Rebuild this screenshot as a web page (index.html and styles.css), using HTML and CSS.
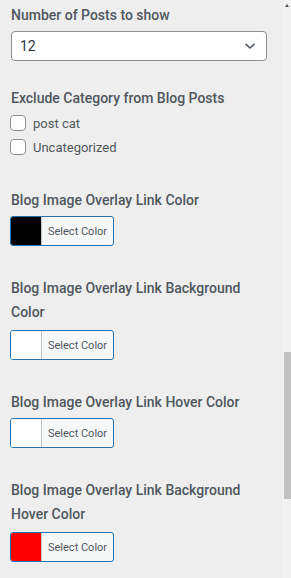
FILE: index.html
```html
<!DOCTYPE html>
<html>
<head>
  <meta charset="UTF-8">
  <title>Customizer - Blog Options</title>
  <link rel="stylesheet" href="styles.css">
</head>
<body>
  <div class="customize-pane">
    <ul class="control-list">
      <li class="control control-select">
        <span class="control-title">Number of Posts to show</span>
        <div class="select-box">
          <span class="select-value">12</span>
          <svg class="select-arrow" width="12" height="8" viewBox="0 0 12 8">
            <path d="M1.5 1.8 L6 6 L10.5 1.8" fill="none" stroke="#50575e" stroke-width="1.6"/>
          </svg>
        </div>
      </li>

      <li class="control control-checks">
        <span class="control-title">Exclude Category from Blog Posts</span>
        <label class="check-row"><span class="check-box"></span>post cat</label>
        <label class="check-row"><span class="check-box"></span>Uncategorized</label>
      </li>

      <li class="control">
        <span class="control-title">Blog Image Overlay Link Color</span>
        <button class="color-button"><span class="color-swatch" style="background:#000"></span><span class="color-text">Select Color</span></button>
      </li>

      <li class="control">
        <span class="control-title title-long">Blog Image Overlay Link Background Color</span>
        <button class="color-button"><span class="color-swatch" style="background:#fff"></span><span class="color-text">Select Color</span></button>
      </li>

      <li class="control">
        <span class="control-title">Blog Image Overlay Link Hover Color</span>
        <button class="color-button"><span class="color-swatch" style="background:#fff"></span><span class="color-text">Select Color</span></button>
      </li>

      <li class="control">
        <span class="control-title title-long">Blog Image Overlay Link Background Hover Color</span>
        <button class="color-button"><span class="color-swatch" style="background:#ff0000"></span><span class="color-text">Select Color</span></button>
      </li>
    </ul>
  </div>

  <div class="scrollbar">
    <span class="scroll-arrow"></span>
    <span class="scroll-thumb"></span>
  </div>
</body>
</html>
```

FILE: styles.css
```css
/* WordPress customizer side pane */
:root {
  --pane-bg: #eeeeee;
  --title-color: #50575e;
  --text-color: #50575e;
  --input-border: #8c8f94;
  --accent: #2271b1;
  --button-bg: #f6f7f7;
  --track-bg: #f1f1f1;
  --thumb-bg: #c1c1c1;
}

html, body {
  height: 100%;
}

body {
  margin: 0;
  display: flex;
  background-color: var(--pane-bg);
  font-family: Roboto, "Liberation Sans", sans-serif;
  color: var(--text-color);
  overflow: hidden;
}

.customize-pane {
  width: 282px;
  flex-shrink: 0;
}

.control-list {
  list-style: none;
  margin: 0;
  padding: 3px 16px 0 10px;
}

.control {
  margin-bottom: 30px;
}

.control-select {
  margin-bottom: 25px;
}

.control-checks {
  margin-bottom: 29px;
}

.control-title {
  display: block;
  padding-left: 1px;
  margin-bottom: 4px;
  font-size: 14px;
  font-weight: 500;
  line-height: 24px;
  color: var(--title-color);
}

/* wrapped titles sit a bit further from their button */
.title-long {
  margin-bottom: 6px;
}

.control-checks .control-title {
  margin-bottom: 1px;
}

/* select */
.select-box {
  box-sizing: border-box;
  width: 256px;
  height: 30px;
  margin-left: 1px;
  padding: 0 8px;
  display: flex;
  align-items: center;
  justify-content: space-between;
  background: #fff;
  border: 1px solid var(--input-border);
  border-radius: 4px;
  font-size: 14px;
  color: #2c3338;
}

.select-arrow {
  margin-right: 2px;
}

/* checkboxes */
.check-row {
  display: flex;
  align-items: center;
  gap: 7px;
  height: 24px;
  font-size: 13px;
  color: var(--text-color);
}

.check-box {
  box-sizing: border-box;
  width: 16px;
  height: 16px;
  background: #fff;
  border: 1px solid var(--input-border);
  border-radius: 4px;
}

/* color picker button */
.color-button {
  box-sizing: border-box;
  display: flex;
  width: 104px;
  height: 30px;
  padding: 0;
  background: var(--button-bg);
  border: 1px solid var(--accent);
  border-radius: 3px;
  overflow: hidden;
  font-family: inherit;
  cursor: pointer;
}

.color-swatch {
  width: 30px;
  height: 100%;
  border-right: 1px solid #c3c4c7;
}

.color-text {
  flex: 1;
  align-self: center;
  padding-left: 6px;
  text-align: left;
  font-size: 11px;
  color: var(--text-color);
}

/* fake scrollbar */
.scrollbar {
  width: 9px;
  flex-shrink: 0;
  background: var(--track-bg);
  display: flex;
  flex-direction: column;
  align-items: flex-end;
}

.scroll-arrow {
  margin: 4px 2px 0 0;
  width: 0;
  height: 0;
  border-left: 2.5px solid transparent;
  border-right: 2.5px solid transparent;
  border-bottom: 3px solid #505050;
}

.scroll-thumb {
  margin-top: 345px;
  width: 7px;
  height: 147px;
  background: var(--thumb-bg);
}
```
